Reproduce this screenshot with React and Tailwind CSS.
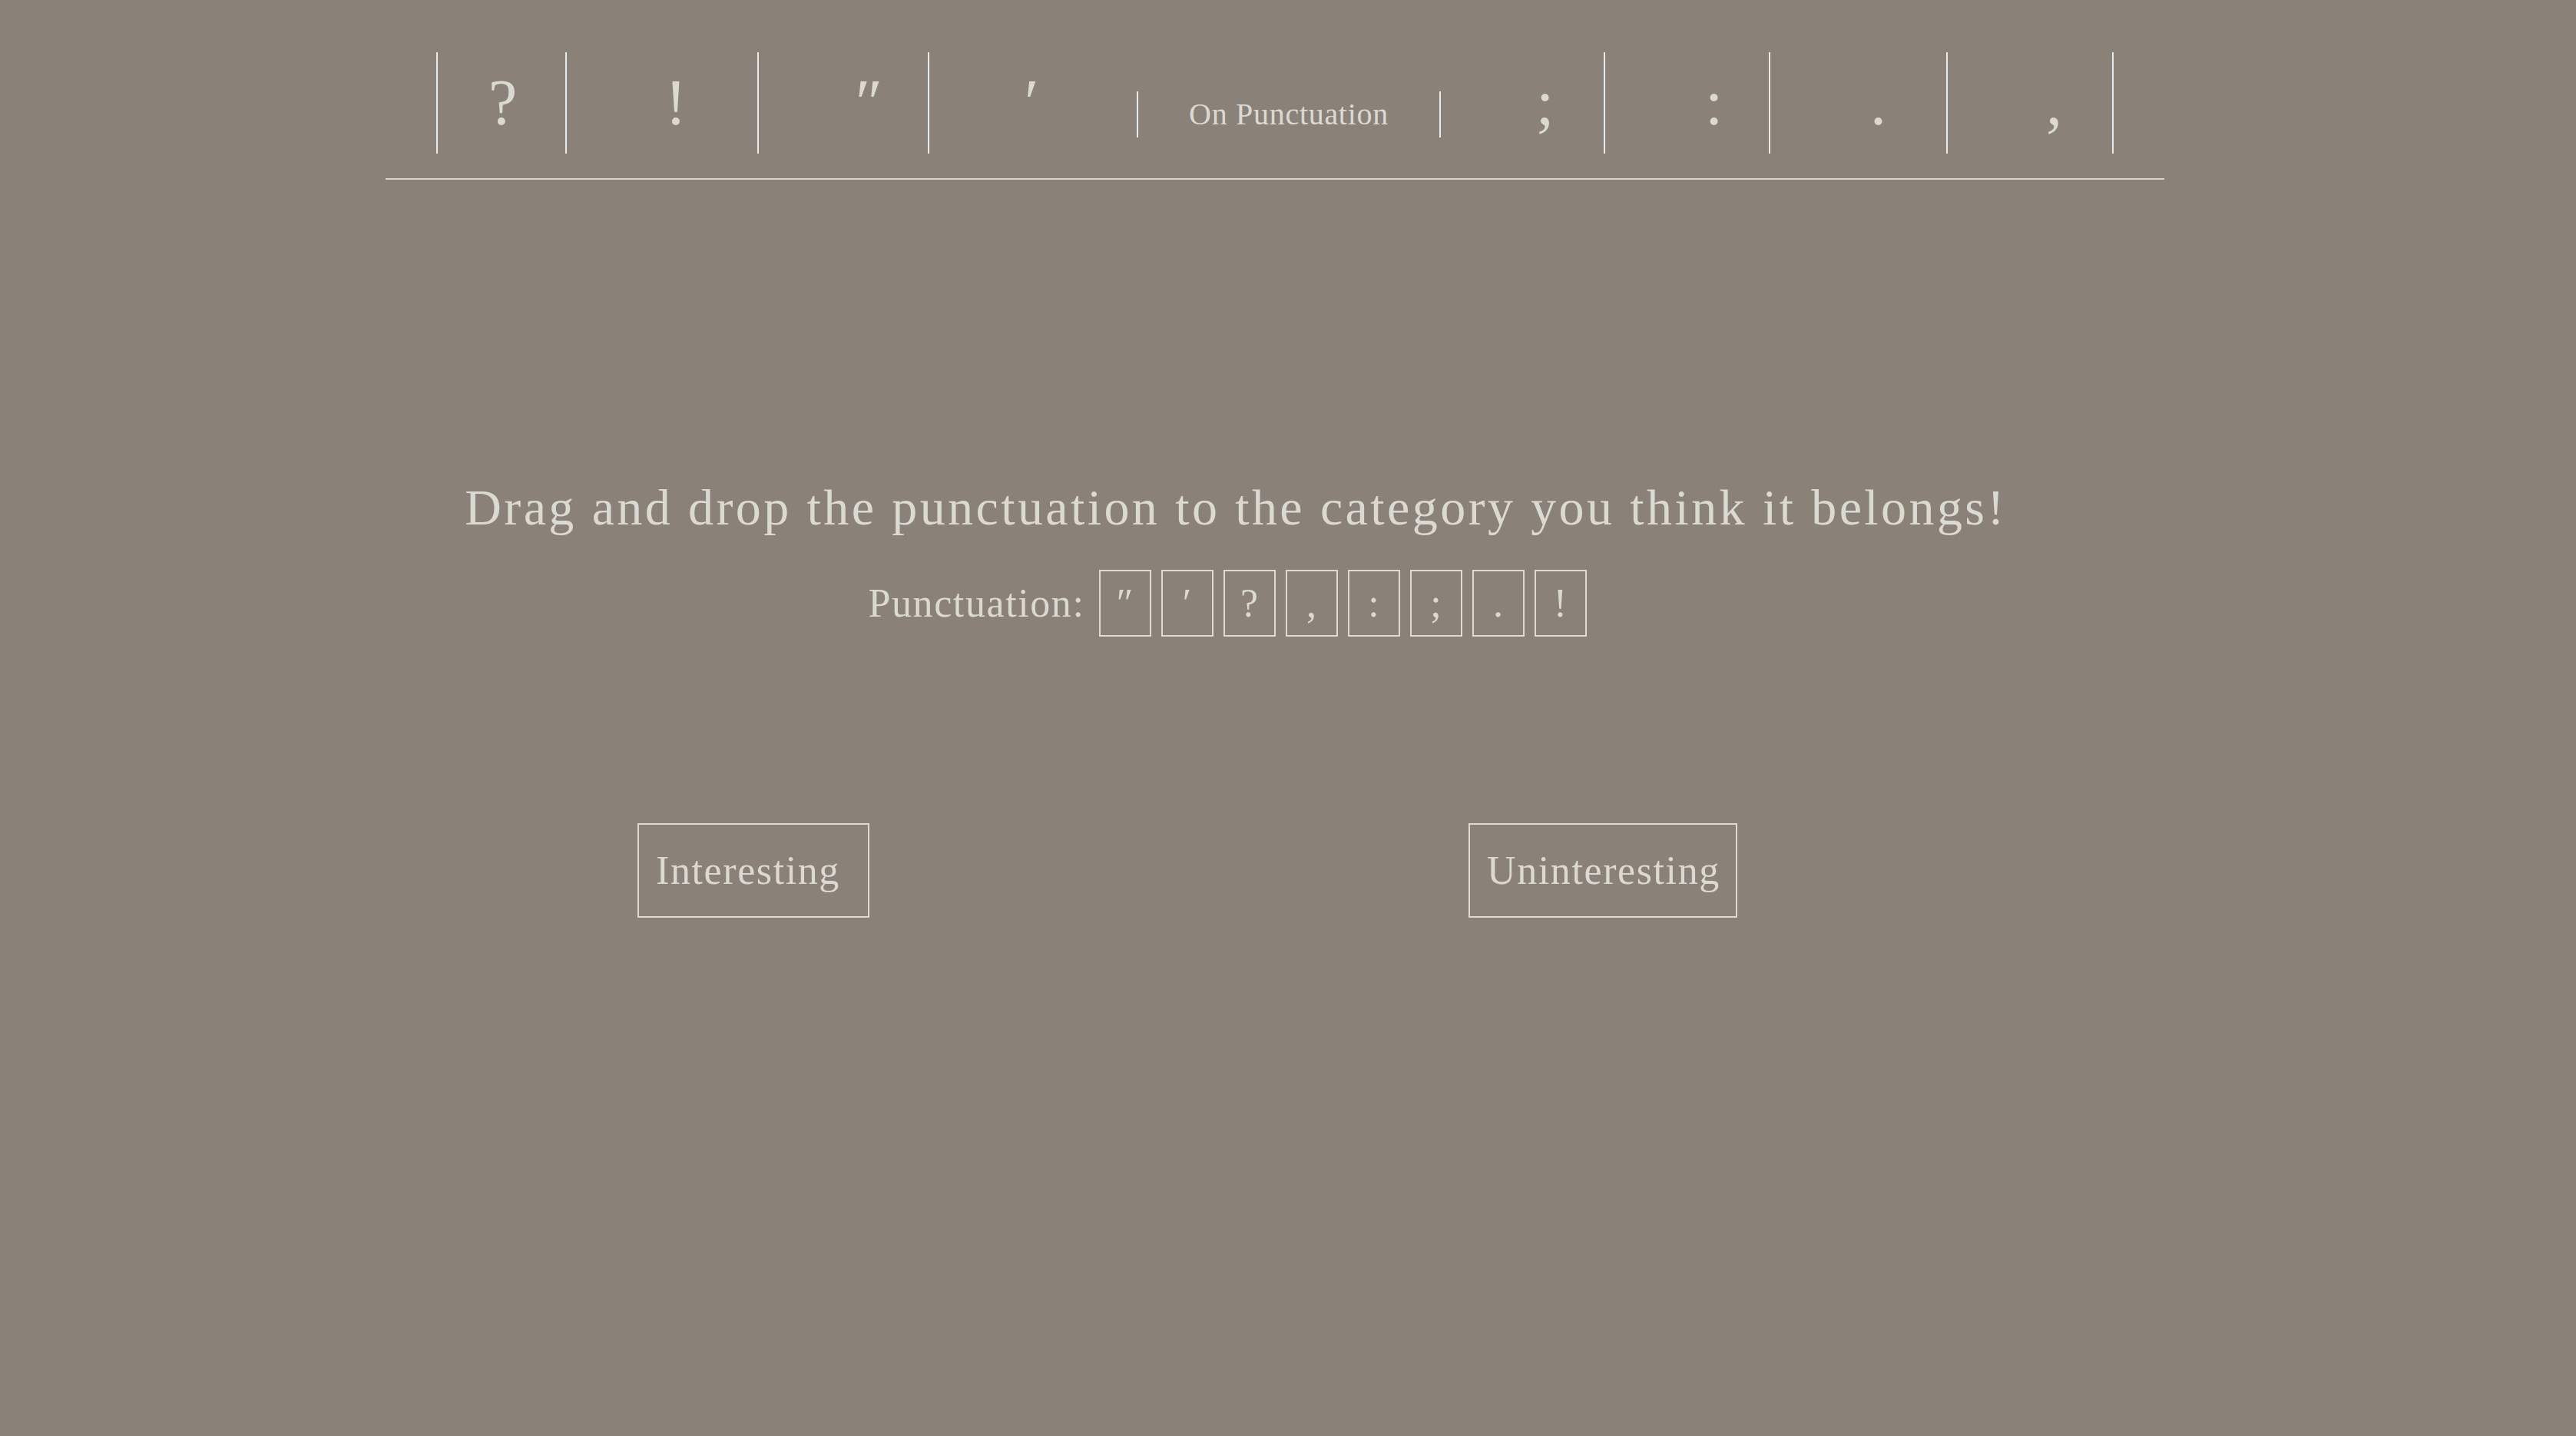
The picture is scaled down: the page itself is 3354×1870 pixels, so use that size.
import React from 'react';

// nav cells: dividers on the left, the last one closes on the right
const navLeft = [
  { ch: '?', cls: 'w-[168px] pl-[66px] border-l-2' },
  { ch: '!', cls: 'w-[250px] pl-[128px] border-l-2' },
  { ch: '″', cls: 'w-[222px] pl-[126px] border-l-2' },
  { ch: '′', cls: 'w-[272px] pl-[124px] border-l-2' },
];

const navRight = [
  { ch: ';', cls: 'w-[212px] pl-[124px]' },
  { ch: ':', cls: 'w-[215px] pl-[130px] border-l-2' },
  { ch: '.', cls: 'w-[231px] pl-[130px] border-l-2' },
  { ch: ',', cls: 'w-[218px] pl-[128px] border-x-2' },
];

const marks = ['″', '′', '?', ',', ':', ';', '.', '!'];

const NavCell = ({ ch, cls }) => (
  <div className={`border-[#e6eaec] text-[84px] leading-[132px] ${cls}`}>{ch}</div>
);

const App = () => {
  return (
    <div
      className="min-h-screen w-full bg-[#8a8279] text-[#dadad2]"
      style={{ fontFamily: '"Liberation Serif", "DejaVu Serif", serif' }}
    >
      {/* top nav */}
      <div className="pt-[68px] pl-[502px] pr-[536px]">
        <nav className="flex items-baseline justify-center border-b-2 border-[#d8d6cb] pb-[32px]">
          {navLeft.map(n => <NavCell key={n.ch} {...n} />)}
          <div className="w-[396px] border-x-2 border-[#e6eaec] text-center text-[40px] leading-[60px] tracking-[0.7px]">
            On Punctuation
          </div>
          {navRight.map(n => <NavCell key={n.ch} {...n} />)}
        </nav>
      </div>

      {/* heading */}
      <h1 className="mt-[394px] pr-[136px] text-center text-[66px] leading-none tracking-[3.4px]">
        Drag and drop the punctuation to the category you think it belongs!
      </h1>

      {/* draggable marks */}
      <div className="mt-[48px] flex items-center justify-center pr-[158px]">
        <span className="mr-[18px] text-[52px] leading-none tracking-[1.6px]">Punctuation:</span>
        <div className="flex gap-[13px]">
          {marks.map(m => (
            <div
              key={m}
              className="flex h-[87px] w-[68px] cursor-move items-center justify-center border-2 border-[#dcdcd4] text-[52px] leading-none"
            >
              {m}
            </div>
          ))}
        </div>
      </div>

      {/* drop zones */}
      <div className="mt-[243px] flex gap-[780px] pl-[830px]">
        <div className="flex h-[123px] w-[302px] items-center border-2 border-[#dcdcd4] pl-[22px] text-[52px] leading-none tracking-[1.6px]">
          Interesting
        </div>
        <div className="flex h-[123px] w-[350px] items-center border-2 border-[#dcdcd4] pl-[22px] text-[52px] leading-none tracking-[1.6px]">
          Uninteresting
        </div>
      </div>
    </div>
  );
};

export default App;
